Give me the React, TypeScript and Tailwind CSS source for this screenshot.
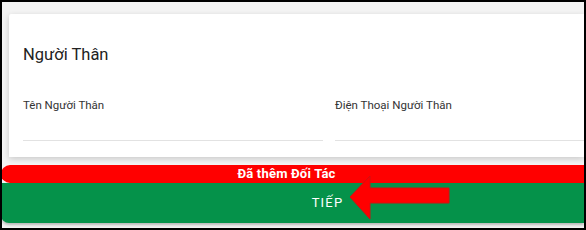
import * as React from "react";

export default function App() {
  return (
    <div
      className="relative h-[230px] w-[586px] overflow-hidden border-2 border-black bg-[#f4f4f4]"
      style={{ fontFamily: "Roboto, 'Liberation Sans', sans-serif" }}
    >
      <div className="ml-[7px] mt-[12px] h-[143px] rounded-tl-[2px] bg-white pl-[14px] pt-[29px] shadow-[0_2px_6px_rgba(0,0,0,0.18)]">
        <h2 className="text-[16.5px] leading-[24px] text-[#222]">Người Thân</h2>
        <div className="mt-[31px] grid grid-cols-[300px_260px] gap-x-[12px]">
          <div>
            <p className="text-[11.5px] leading-[14px] text-[#333]">Tên Người Thân</p>
            <div className="mt-[28px] h-px bg-[#e2e2e2]" />
          </div>
          <div>
            <p className="text-[11.5px] leading-[14px] text-[#333]">Điện Thoại Người Thân</p>
            <div className="mt-[28px] h-px bg-[#e2e2e2]" />
          </div>
        </div>
      </div>

      <div className="ml-[-1px] mt-[8px] flex h-[18px] items-center justify-center rounded-tl-[9px] rounded-bl-[9px] bg-[#ff0000] pr-[12px] text-[13px] font-bold tracking-[0.2px] text-white">
        Đã thêm Đối Tác
      </div>
      <div className="ml-[-1px] flex h-[40px] items-center justify-center rounded-bl-[8px] bg-[#05924a] pl-[70px] text-[13px] tracking-[1.2px] text-white shadow-[0_2px_3px_rgba(0,0,0,0.25)]">
        TIẾP
      </div>

      <svg
        className="absolute left-[344px] top-[170px]"
        width="108"
        height="52"
        viewBox="0 0 108 52"
      >
        <path
          d="M4 25 L24 4 L24 16 L103 16 L103 31 L24 31 L24 47 Z"
          fill="#ff0000"
          stroke="#d21010"
          strokeWidth="1"
        />
      </svg>
    </div>
  );
}
